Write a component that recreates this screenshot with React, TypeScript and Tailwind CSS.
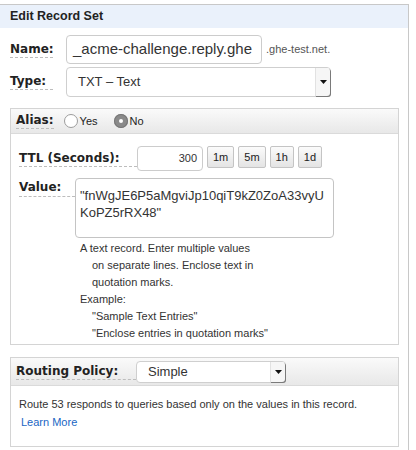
import type { ReactNode } from "react";

const sans = "font-['Liberation_Sans',Arial,sans-serif]";
const labelFont = "font-['DejaVu_Sans',Verdana,sans-serif] font-bold text-[12px] text-[#222]";

function Label({ children, className = "" }: { children: ReactNode; className?: string }) {
  return (
    <span className={`${labelFont} border-b border-dashed border-[#bdbdbd] leading-[15px] ${className}`}>{children}</span>
  );
}

function SelectBox({ value, className = "" }: { value: string; className?: string }) {
  return (
    <div className={`flex items-stretch rounded-[4px] border border-[#cfcfcf] bg-white ${className}`}>
      <span className="flex flex-1 items-center pl-[11px] text-[13px] text-[#333]">{value}</span>
      <span className="flex w-[15px] items-center justify-center rounded-r-[3px] border-l border-[#e2e2e2] bg-[#f6f6f6] shadow-[1px_1px_0_#7a7a7a]">
        <svg width="7" height="4" viewBox="0 0 7 4">
          <path d="M0 0h7L3.5 4z" fill="#111" />
        </svg>
      </span>
    </div>
  );
}

function TtlButton({ children }: { children: ReactNode }) {
  return (
    <span className="flex h-[22px] items-center rounded-[2px] border border-[#c4c4c4] bg-gradient-to-b from-[#fbfbfb] to-[#e4e4e4] px-[5px] text-[11px] text-[#222]">
      {children}
    </span>
  );
}

function Radio({ checked }: { checked?: boolean }) {
  if (checked) {
    return (
      <span className="grid h-[14px] w-[14px] place-items-center rounded-full bg-[#8a8a8a] shadow-[inset_0_0_0_1px_#777]">
        <span className="h-[4px] w-[4px] rounded-full bg-white" />
      </span>
    );
  }
  return <span className="h-[14px] w-[14px] rounded-full border border-[#9c9c9c] bg-white" />;
}

export default function App() {
  return (
    <div className={`${sans} h-[450px] bg-white pt-[4px]`}>
      <div className="w-[409px] h-[446px] border-t border-r border-[#c8c8c8]">
        <div className="flex h-[23px] items-center bg-[#eaf1fb] pl-[10px] text-[12.5px] font-bold text-[#222]">Edit Record Set</div>

        <div className="mt-[7px] flex items-center pl-[10px]">
          <Label className="w-[43px]">Name:</Label>
          <div className="ml-[13px] flex h-[29px] w-[196px] items-center overflow-hidden rounded-[4px] border border-[#cccccc] pl-[6px] text-[15px] whitespace-nowrap text-[#333]">
            _acme-challenge.reply.ghe
          </div>
          <span className="ml-[4px] text-[11px] text-[#555]">.ghe-test.net.</span>
        </div>

        <div className="mt-[3px] flex items-center pl-[10px]">
          <Label className="w-[43px]">Type:</Label>
          <SelectBox value="TXT – Text" className="ml-[13px] h-[30px] w-[265px]" />
        </div>

        <div className="ml-[10px] mt-[11px] w-[389px] border border-[#d4d4d4]">
          <div className="flex h-[25px] items-center gap-[4px] border-b border-[#dadada] bg-gradient-to-b from-[#fafafa] to-[#e8e8e8] pl-[5px] text-[11px] text-[#222]">
            <Label>Alias:</Label>
            <span className="ml-[6px] flex items-center gap-[2px]">
              <Radio />
              Yes
            </span>
            <span className="ml-[12px] flex items-center gap-[2px]">
              <Radio checked />
              No
            </span>
          </div>

          <div className="mt-[12px] flex items-center pl-[8px]">
            <Label className="w-[118px]">TTL (Seconds):</Label>
            <div className="flex h-[25px] w-[66px] items-center justify-end rounded-[4px] border border-[#cccccc] pr-[5px] text-[11px] text-[#333]">
              300
            </div>
            <div className="ml-[4px] flex gap-[4px] self-start">
              <TtlButton>1m</TtlButton>
              <TtlButton>5m</TtlButton>
              <TtlButton>1h</TtlButton>
              <TtlButton>1d</TtlButton>
            </div>
          </div>

          <div className="mt-[7px] flex pl-[8px]">
            <Label className="mt-[2px] h-[17px] w-[56px] self-start">Value:</Label>
            <div className="h-[60px] w-[259px] rounded-[4px] border border-[#c4c4c4] px-[4px] pt-[8px] text-[13px] leading-[17px] whitespace-nowrap text-[#333]">
              <p>"fnWgJE6P5aMgviJp10qiT9kZ0ZoA33vyU</p>
              <p>KoPZ5rRX48"</p>
            </div>
          </div>

          <div className="ml-[69px] mt-[2px] pb-[2px] text-[11px] leading-[17px] text-[#333]">
            <p>A text record. Enter multiple values</p>
            <p className="pl-[12px]">on separate lines. Enclose text in</p>
            <p className="pl-[12px]">quotation marks.</p>
            <p>Example:</p>
            <p className="pl-[12px]">"Sample Text Entries"</p>
            <p className="pl-[12px]">"Enclose entries in quotation marks"</p>
          </div>
        </div>

        <div className="ml-[10px] mt-[12px] w-[389px] border border-[#d4d4d4]">
          <div className="flex h-[28px] items-center border-b border-[#dadada] bg-gradient-to-b from-[#fafafa] to-[#e8e8e8] pl-[5px]">
            <Label className="w-[120px]">Routing Policy:</Label>
            <SelectBox value="Simple" className="h-[22px] w-[150px]" />
          </div>
          <div className="px-[8px] pb-[15px] pt-[9px] text-[11px] leading-[18px] text-[#333]">
            <p>Route 53 responds to queries based only on the values in this record.</p>
            <p className="pl-[2px] text-[#1a66c4]">Learn More</p>
          </div>
        </div>
      </div>
    </div>
  );
}
